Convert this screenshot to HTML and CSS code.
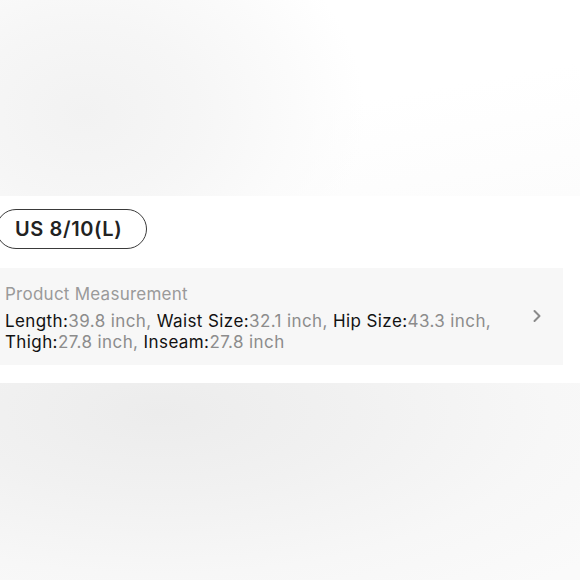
FILE: index.html
```html
<!DOCTYPE html>
<html>
<head>
<meta charset="utf-8">
<link rel="stylesheet" href="styles.css">
</head>
<body>
<div class="top-band"></div>
<section class="size-section">
  <div class="pill">US 8/10(L)</div>
  <div class="measure">
    <div class="measure-text">
      <div class="measure-title">Product Measurement</div>
      <div class="measure-values">
        <b>Length:</b><span>39.8 inch, </span><b>Waist Size:</b><span>32.1 inch, </span><b>Hip Size:</b><span>43.3 inch,</span><br>
        <b>Thigh:</b><span>27.8 inch, </span><b>Inseam:</b><span>27.8 inch</span>
      </div>
    </div>
    <svg class="chevron" width="10" height="14" viewBox="0 0 10 14"><path d="M2.5 2 L7.5 7 L2.5 12" fill="none" stroke="#8a8a8a" stroke-width="2" stroke-linecap="round" stroke-linejoin="round"/></svg>
  </div>
</section>
<div class="bottom-band"></div>
</body>
</html>
```
FILE: styles.css
```css
html, body {
  margin: 0;
  padding: 0;
  background: #fff;
  font-family: Inter, "Liberation Sans", Arial, sans-serif;
  width: 580px;
  height: 580px;
  overflow: hidden;
}
.top-band {
  height: 196px;
  background:
    radial-gradient(ellipse 280px 220px at 85px 113px, #f2f2f2 0%, #f6f6f6 40%, #fbfbfb 75%, rgba(255,255,255,0) 100%),
    linear-gradient(170deg, #ffffff 55%, #fcfcfc 100%);
}
.size-section {
  height: 187px;
  box-sizing: border-box;
  padding-top: 13px;
  background: #fff;
}
.pill {
  margin-left: -4px;
  width: 151px;
  height: 40px;
  box-sizing: border-box;
  border: 1.5px solid #3a3a3a;
  border-radius: 20px;
  font-weight: 600;
  font-size: 20px;
  letter-spacing: 0.6px;
  color: #222;
  display: flex;
  align-items: center;
  padding-left: 18px;
}
.measure {
  margin-top: 19px;
  width: 563px;
  height: 97px;
  box-sizing: border-box;
  background: #f7f7f7;
  padding: 16px 0 0 5px;
  display: flex;
  align-items: center;
}
.measure-text {
  flex: 1;
  align-self: flex-start;
}
.measure-title {
  font-size: 17px;
  letter-spacing: 0.25px;
  line-height: 21px;
  color: #9a9a9a;
  margin-bottom: 6px;
}
.measure-values {
  font-size: 17px;
  letter-spacing: 0.4px;
  line-height: 21px;
  color: #111;
}
.measure-values b {
  font-weight: normal;
  color: #111;
}
.measure-values span {
  color: #8c8c8c;
}
.chevron {
  margin-right: 21px;
  margin-top: -17px;
}
.bottom-band {
  height: 197px;
  background: radial-gradient(ellipse 560px 230px at 160px 30px, #ececec 0%, #f1f1f1 35%, #f7f7f7 70%, #fafafa 100%);
}
```
